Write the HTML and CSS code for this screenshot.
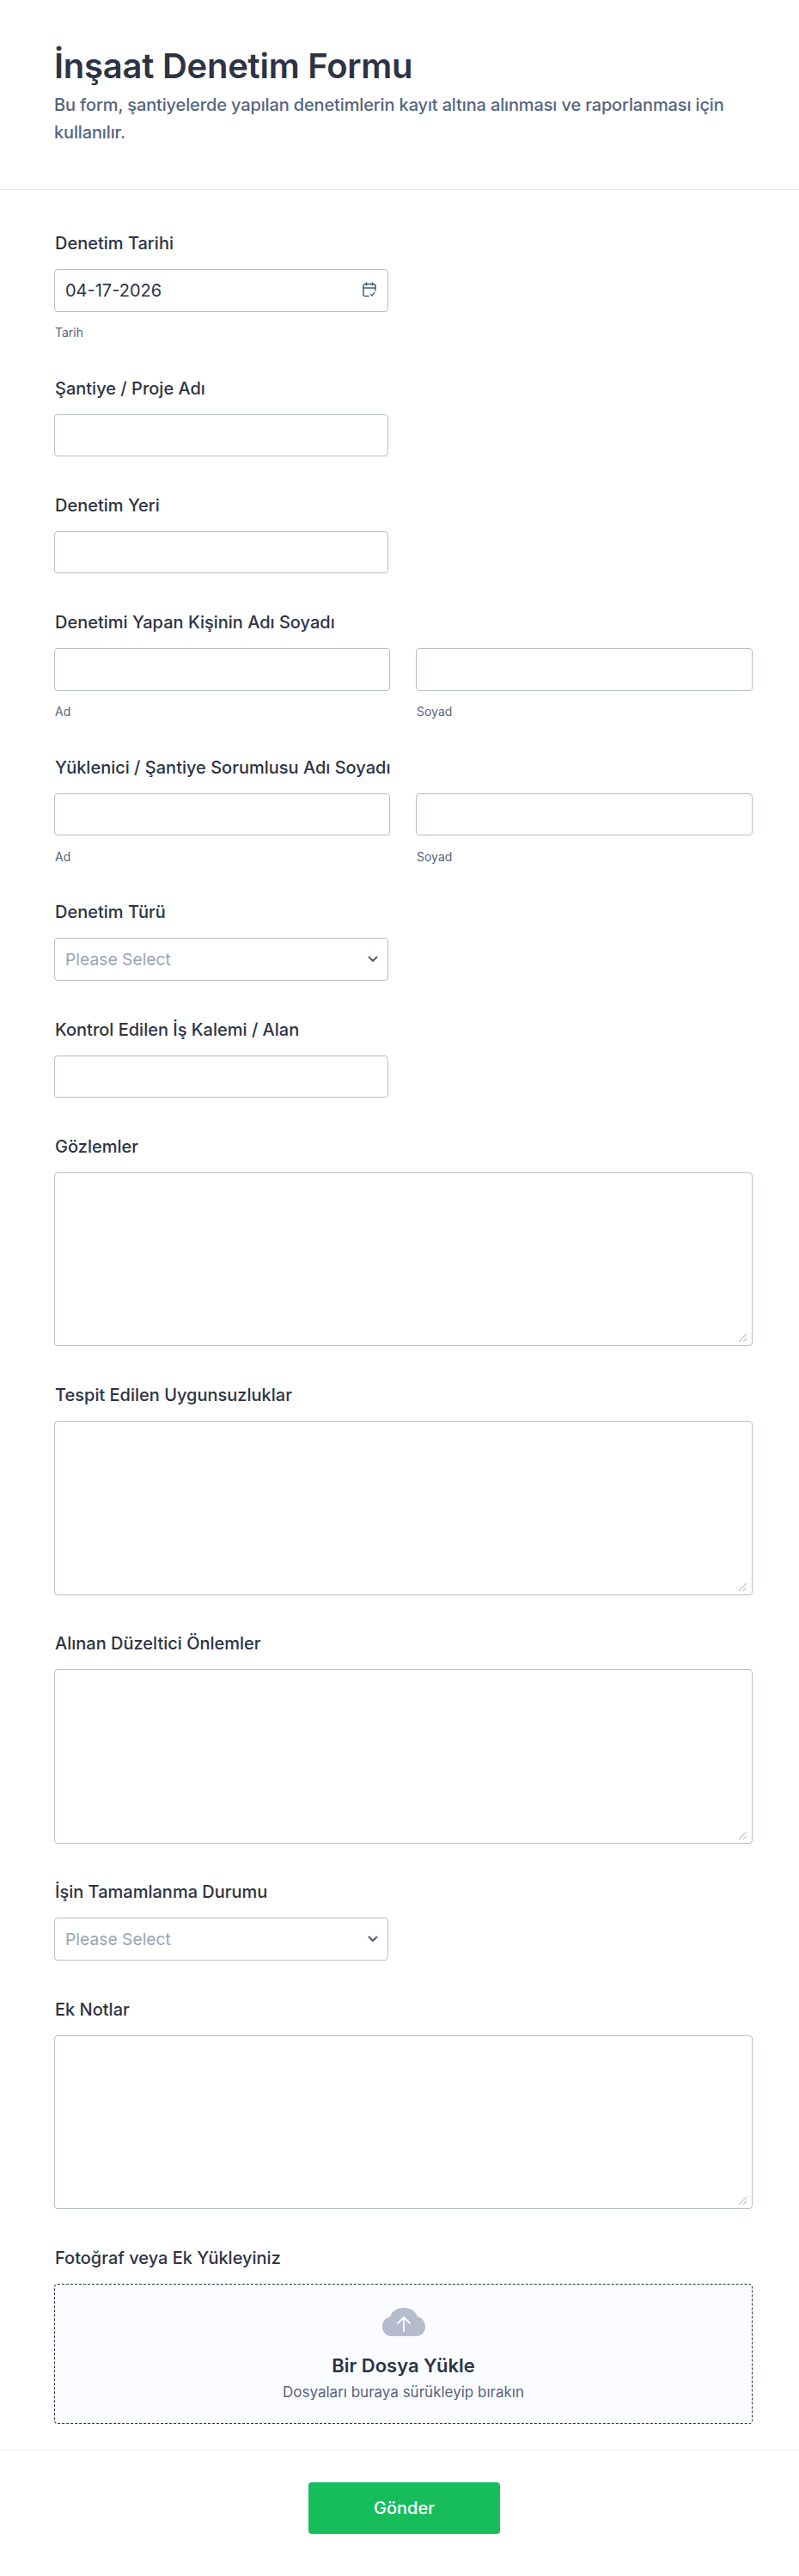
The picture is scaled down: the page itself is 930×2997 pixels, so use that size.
FILE: index.html
```html
<!DOCTYPE html>
<html lang="tr">
<head>
    <meta charset="UTF-8">
    <meta name="viewport" content="width=device-width, initial-scale=1.0">
    <title>İnşaat Denetim Formu</title>
    <link rel="stylesheet" href="styles.css">
</head>
<body>
    <header class="form-header">
        <h1>İnşaat Denetim Formu</h1>
        <p>Bu form, şantiyelerde yapılan denetimlerin kayıt altına alınması ve raporlanması için kullanılır.</p>
    </header>

    <form class="form-body">
        <!-- Date -->
        <div class="field">
            <label class="field-label">Denetim Tarihi</label>
            <div class="input-wrap short">
                <input type="text" class="input" value="04-17-2026">
                <svg class="date-icon" width="18" height="18" viewBox="0 0 18 18" fill="none" stroke="#4c5a75" stroke-width="1.5" stroke-linecap="round" stroke-linejoin="round">
                    <path d="M8 16.5H4a2 2 0 0 1-2-2V4.500a2 2 0 0 1 2-2h10a2 2 0 0 1 2 2V10"/>
                    <path d="M5.500 1v3M12.500 1v3M2 7h14"/>
                    <path d="M10.500 14.500l1.500 1.500 3-3.500" stroke-width="1.2"/>
                </svg>
            </div>
            <span class="sub-label">Tarih</span>
        </div>

        <div class="field">
            <label class="field-label">Şantiye / Proje Adı</label>
            <input type="text" class="input short">
        </div>

        <div class="field">
            <label class="field-label">Denetim Yeri</label>
            <input type="text" class="input short">
        </div>

        <!-- Names -->
        <div class="field">
            <label class="field-label">Denetimi Yapan Kişinin Adı Soyadı</label>
            <div class="name-row">
                <div class="name-col">
                    <input type="text" class="input">
                    <span class="sub-label">Ad</span>
                </div>
                <div class="name-col">
                    <input type="text" class="input">
                    <span class="sub-label">Soyad</span>
                </div>
            </div>
        </div>

        <div class="field">
            <label class="field-label">Yüklenici / Şantiye Sorumlusu Adı Soyadı</label>
            <div class="name-row">
                <div class="name-col">
                    <input type="text" class="input">
                    <span class="sub-label">Ad</span>
                </div>
                <div class="name-col">
                    <input type="text" class="input">
                    <span class="sub-label">Soyad</span>
                </div>
            </div>
        </div>

        <div class="field">
            <label class="field-label">Denetim Türü</label>
            <div class="input-wrap short">
                <select class="input select">
                    <option>Please Select</option>
                </select>
                <svg class="select-icon" width="12" height="8" viewBox="0 0 12 8" fill="none" stroke="#4c5a75" stroke-width="2" stroke-linecap="round" stroke-linejoin="round">
                    <path d="M1.500 1.500L6 6l4.500-4.500"/>
                </svg>
            </div>
        </div>

        <div class="field">
            <label class="field-label">Kontrol Edilen İş Kalemi / Alan</label>
            <input type="text" class="input short">
        </div>

        <!-- Long text -->
        <div class="field">
            <label class="field-label">Gözlemler</label>
            <textarea class="textarea"></textarea>
        </div>

        <div class="field">
            <label class="field-label">Tespit Edilen Uygunsuzluklar</label>
            <textarea class="textarea"></textarea>
        </div>

        <div class="field">
            <label class="field-label">Alınan Düzeltici Önlemler</label>
            <textarea class="textarea"></textarea>
        </div>

        <div class="field">
            <label class="field-label">İşin Tamamlanma Durumu</label>
            <div class="input-wrap short">
                <select class="input select">
                    <option>Please Select</option>
                </select>
                <svg class="select-icon" width="12" height="8" viewBox="0 0 12 8" fill="none" stroke="#4c5a75" stroke-width="2" stroke-linecap="round" stroke-linejoin="round">
                    <path d="M1.500 1.500L6 6l4.500-4.500"/>
                </svg>
            </div>
        </div>

        <div class="field">
            <label class="field-label">Ek Notlar</label>
            <textarea class="textarea"></textarea>
        </div>

        <!-- Upload -->
        <div class="field">
            <label class="field-label">Fotoğraf veya Ek Yükleyiniz</label>
            <div class="upload">
                <svg class="upload-icon" width="50" height="33" viewBox="0 0 50 33">
                    <path fill="#b4bccd" d="M11 33C4 33 0 28 0 22 0 16 4 11 9 10.500 11 4 17 0 25 0s14 4 16 10.500C46 11 50 16 50 22 50 28 46 33 39 33z"/>
                    <path fill="none" stroke="#fff" stroke-width="1.800" stroke-linecap="round" stroke-linejoin="round" d="M25 27V11M18 18l7-7 7 7"/>
                </svg>
                <div class="upload-title">Bir Dosya Yükle</div>
                <div class="upload-hint">Dosyaları buraya sürükleyip bırakın</div>
            </div>
        </div>
    </form>

    <footer class="form-footer">
        <button type="button" class="submit">Gönder</button>
    </footer>
</body>
</html>
```

FILE: styles.css
```css
/* General Styles */
* {
    box-sizing: border-box;
}

body {
    font-family: "Inter", sans-serif;
    margin: 0;
    background: #fff;
    color: #2c3345;
}

.form-header {
    height: 221px;
    padding: 51px 63px 0;
    border-bottom: 1px solid #e3e5f0;
}

.form-header h1 {
    margin: 0;
    font-size: 40px;
    line-height: 52px;
    font-weight: 600;
    letter-spacing: -0.25px;
}

.form-header p {
    margin: 3px 0 0;
    font-size: 20px;
    line-height: 32px;
    font-weight: 500;
    letter-spacing: -0.14px;
    color: #57647e;
}

.form-body {
    display: flex;
    flex-direction: column;
    gap: 46.7px;
    padding: 52px 54px 30px 63px;
    border-bottom: 1px solid #eceef5;
}

.field {
    display: flex;
    flex-direction: column;
}

.field-label {
    font-size: 20px;
    line-height: 20px;
    font-weight: 500;
    margin: 0 0 20px 1px;
}

.input {
    display: block;
    width: 100%;
    height: 49.5px;
    padding: 0 12px;
    border: 1px solid #b8bdc9;
    border-radius: 4px;
    background: #fff;
    font-family: inherit;
    font-size: 20px;
    color: #2c3345;
    outline: none;
}

.short {
    width: 389px;
}

.input-wrap {
    position: relative;
}

.select {
    appearance: none;
    -webkit-appearance: none;
    font-size: 19.3px;
    color: #9aa3b5;
}

.date-icon {
    position: absolute;
    top: 15px;
    right: 13px;
}

.select-icon {
    position: absolute;
    top: 21px;
    right: 12px;
}

.sub-label {
    display: block;
    margin: 16.5px 0 0 1px;
    font-size: 14px;
    line-height: 16px;
    color: #57647e;
}

.name-row {
    display: grid;
    grid-template-columns: 391px 392px;
    gap: 30px;
}

.textarea {
    display: block;
    width: 100%;
    height: 202.5px;
    padding: 8px 12px;
    border: 1px solid #b8bdc9;
    border-radius: 4px;
    background: #fff url("data:image/svg+xml,%3Csvg xmlns='http://www.w3.org/2000/svg' width='11' height='11'%3E%3Cpath d='M1 10L10 1M6 10l4-4' stroke='%23c3c8d6' stroke-width='1.2' fill='none'/%3E%3C/svg%3E") no-repeat right 5px bottom 3px;
    font-family: inherit;
    font-size: 20px;
    outline: none;
    resize: none;
}

.upload {
    display: flex;
    flex-direction: column;
    align-items: center;
    height: 163px;
    padding-top: 27px;
    border: 1px dashed #2c3345;
    border-radius: 4px;
    background: #fbfcff;
}

.upload-icon {
    display: block;
}

.upload-title {
    margin-top: 20px;
    font-size: 22px;
    line-height: 28px;
    font-weight: 600;
}

.upload-hint {
    margin-top: 5px;
    font-size: 17px;
    line-height: 24px;
    color: #57647e;
}

.form-footer {
    display: flex;
    justify-content: center;
    padding: 37px 0 49px 11px;
}

.submit {
    width: 223px;
    height: 60px;
    border: 0;
    border-radius: 4px;
    background: #18bd5b;
    color: #fff;
    font-family: inherit;
    font-size: 20px;
    font-weight: 500;
}
```
